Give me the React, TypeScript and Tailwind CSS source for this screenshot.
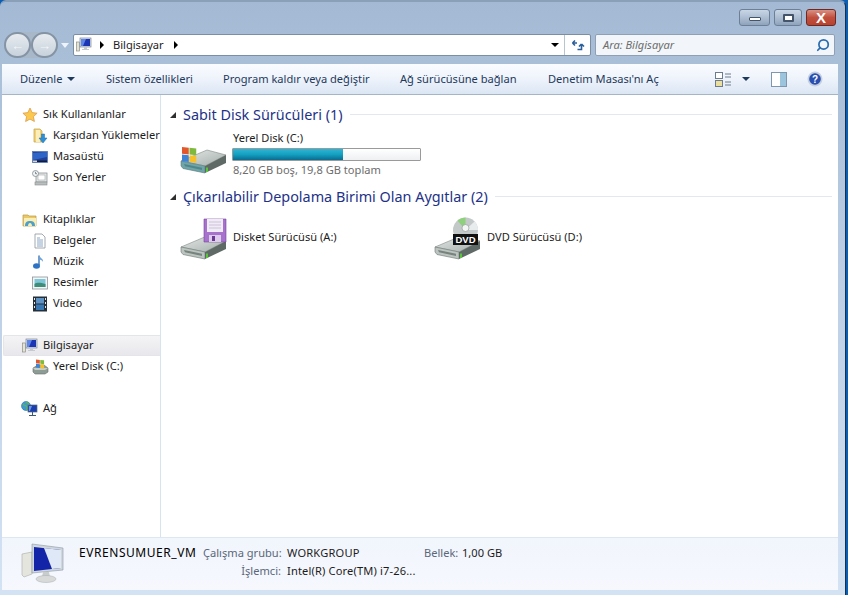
import { Search } from 'lucide-react'
import type { ReactNode } from 'react'

const Caret = ({ className = '' }: { className?: string }) => (
  <span className={`inline-block h-0 w-0 border-x-[4px] border-t-[4px] border-x-transparent border-t-[#1e395b] ${className}`} />
)

const Crumb = () => <span className="inline-block h-0 w-0 border-y-[4px] border-l-[4px] border-y-transparent border-l-black" />

// small monitor with a beige tower, used in the address bar and the nav tree
function ComputerIcon() {
  return (
    <svg width="16" height="16" viewBox="0 0 16 16">
      <rect x="0.500" y="5" width="3" height="9" fill="#e3e3d6" stroke="#8f8f86" strokeWidth="0.7" />
      <rect x="4" y="1" width="11" height="9" fill="#d8dee6" stroke="#7d8a99" strokeWidth="0.7" />
      <path d="M5 2h9v7H5z" fill="#1c35b4" />
      <path d="M5 2h5L7 9H5z" fill="#5f86e6" />
      <path d="M8 10h3v2h2v1H6v-1h2z" fill="#c4cad0" />
    </svg>
  )
}

function StarIcon() {
  return (
    <svg width="16" height="16" viewBox="0 0 16 16">
      <path d="M8 1l2.100 4.600 5 .6-3.700 3.400 1 4.900L8 12.100l-4.400 2.400 1-4.900L.9 6.200l5-.6z" fill="#fbc94e" stroke="#dc9a4a" strokeWidth="0.8" />
    </svg>
  )
}

function DownloadsIcon() {
  return (
    <svg width="16" height="16" viewBox="0 0 16 16">
      <path d="M2 1h6l2 2v11H2z" fill="#f0d27a" stroke="#c4a04a" strokeWidth="0.7" />
      <path d="M4 2h4v12H4z" fill="#fbeeb8" />
      <path d="M9.500 6h3v4H15l-4 5-4-5h2.500z" fill="#2f8fd6" stroke="#1c6aa8" strokeWidth="0.5" />
    </svg>
  )
}

function DesktopIcon() {
  return (
    <svg width="16" height="16" viewBox="0 0 16 16">
      <rect x="0.500" y="2.500" width="15" height="11" fill="#20419a" stroke="#5d7cb0" strokeWidth="0.8" />
      <path d="M1 4l14-1v5L1 11z" fill="#2e66c8" />
      <rect x="1" y="11.500" width="14" height="1.500" fill="#101c3c" />
      <rect x="1" y="11.500" width="4" height="1.500" fill="#d8d8d8" />
    </svg>
  )
}

function RecentIcon() {
  return (
    <svg width="16" height="16" viewBox="0 0 16 16">
      <rect x="4" y="3" width="11" height="9" fill="#e6e8e8" stroke="#8d9396" strokeWidth="0.8" />
      <rect x="6" y="5" width="7" height="5" fill="#fff" stroke="#a3a8aa" strokeWidth="0.6" />
      <circle cx="3.500" cy="3.500" r="3" fill="#f2f4f4" stroke="#7f8a90" strokeWidth="0.8" />
      <path d="M3.500 1.800v1.900h1.500" fill="none" stroke="#50606a" strokeWidth="0.7" />
      <rect x="3" y="12" width="12" height="3" fill="#b9bdbd" stroke="#878c8c" strokeWidth="0.6" />
    </svg>
  )
}

function LibraryIcon() {
  return (
    <svg width="16" height="16" viewBox="0 0 16 16">
      <path d="M1 3h5l1 1h7v10H1z" fill="#eac868" stroke="#b99a44" strokeWidth="0.7" />
      <path d="M2 6h12v8H2z" fill="#fbeeb4" />
      <path d="M3 14c0-4 2-5 5-5s5 1 5 5z" fill="#4f9fc8" />
      <path d="M6 14c0-2 1-3 2-3s2 1 2 3z" fill="#fbeeb4" />
    </svg>
  )
}

function DocIcon() {
  return (
    <svg width="16" height="16" viewBox="0 0 16 16">
      <path d="M3 1h7l3 3v11H3z" fill="#fff" stroke="#8b949c" strokeWidth="0.8" />
      <path d="M5 5h3M5 7h6M5 9h6M5 11h6M5 13h6" stroke="#6d8fb8" strokeWidth="0.8" />
    </svg>
  )
}

function MusicIcon() {
  return (
    <svg width="16" height="16" viewBox="0 0 16 16">
      <path d="M7 1.500v9.500" stroke="#3f74b4" strokeWidth="1.400" />
      <path d="M7 1.500c1 2.500 4.500 3 4 6.500-.5-1.500-2-2.500-4-2.500z" fill="#6aa2dc" />
      <ellipse cx="4.500" cy="12" rx="3.500" ry="2.700" fill="#2f74c4" />
    </svg>
  )
}

function PictureIcon() {
  return (
    <svg width="16" height="16" viewBox="0 0 16 16">
      <rect x="0.500" y="2" width="15" height="12" fill="#f4f6f6" stroke="#8c9498" strokeWidth="0.8" />
      <rect x="2.500" y="4" width="11" height="8" fill="#7fc6d8" />
      <path d="M2.500 9c3-2 6-1 11 0v3h-11z" fill="#3d8d78" />
    </svg>
  )
}

function VideoIcon() {
  return (
    <svg width="16" height="16" viewBox="0 0 16 16">
      <rect x="1" y="0.500" width="14" height="15" fill="#24303a" />
      <rect x="4" y="2" width="8" height="5.500" fill="#5f93c6" />
      <rect x="4" y="8.500" width="8" height="5.500" fill="#3a78b4" />
      <path d="M2 2h1v2H2zM2 6h1v2H2zM2 10h1v2H2zM13 2h1v2h-1zM13 6h1v2h-1zM13 10h1v2h-1z" fill="#e4e8ea" />
    </svg>
  )
}

function WinFlag({ x, y, s }: { x: number; y: number; s: number }) {
  return (
    <g transform={`translate(${x} ${y}) scale(${s}) skewY(6)`}>
      <rect x="0" y="0" width="4.500" height="4.500" fill="#e2572c" />
      <rect x="5" y="0" width="4.500" height="4.500" fill="#7fba3c" />
      <rect x="0" y="5" width="4.500" height="4.500" fill="#3f83d4" />
      <rect x="5" y="5" width="4.500" height="4.500" fill="#f5c02a" />
    </g>
  )
}

function SmallDiskIcon() {
  return (
    <svg width="17" height="16" viewBox="0 0 17 16">
      <path d="M1 9l5-3h6l4 3v4l-3 2H3l-2-2z" fill="#8e9c96" stroke="#66716c" strokeWidth="0.6" />
      <path d="M1 9h15l-3 2H3z" fill="#c6cec9" />
      <WinFlag x={4} y={0.500} s={0.85} />
    </svg>
  )
}

function NetworkIcon() {
  return (
    <svg width="18" height="16" viewBox="0 0 18 16">
      <circle cx="5" cy="5" r="4.500" fill="#3f9ad0" stroke="#2c6f9c" strokeWidth="0.6" />
      <path d="M2 3c1 2 3 1 4 3s-1 2 0 3M5 1c1 1 3 1 3 3" fill="none" stroke="#63b847" strokeWidth="1.300" />
      <rect x="7" y="4" width="9" height="7" fill="#1b3fae" stroke="#5a6c80" strokeWidth="0.7" />
      <path d="M8 5h3l-2 5H8z" fill="#6f96e6" />
      <path d="M11 11h1v3h3v1H8v-1h3z" fill="#3c5a78" />
    </svg>
  )
}

// the big hard drive body, overlay is whatever sits on top of it
function DriveIcon({ id, overlay }: { id: string; overlay?: ReactNode }) {
  return (
    <svg width="48" height="48" viewBox="0 0 48 48" className="shrink-0">
      <defs>
        <linearGradient id={id} x1="0" y1="0" x2="1" y2="1">
          <stop offset="0" stopColor="#e4e8e6" />
          <stop offset="1" stopColor="#a4aeaa" />
        </linearGradient>
      </defs>
      <path d="M1 34L27 23l19 5-21 11z" fill={`url(#${id})`} stroke="#7f8985" strokeWidth="0.6" />
      <path d="M1 34l24 5v7L3 41.500 1 39z" fill="#bcc4c0" stroke="#6c7572" strokeWidth="0.6" />
      <path d="M4 37l18 3.700v2.300L5 39.200z" fill="#78827e" />
      <path d="M25 39l21-11v8L25 46z" fill="#5f6966" />
      <rect x="26" y="40.500" width="2" height="4.500" fill="#5bc43c" />
      {overlay}
    </svg>
  )
}

const HddOverlay = (
  <>
    <path d="M1 34l24 5v7L3 41.500 1 39z" fill="#2f8a94" opacity="0.55" />
    <WinFlag x={2} y={20} s={1.5} />
  </>
)

const FloppyOverlay = (
  <>
    <path d="M24 6h22v23H24z" fill="#a672cc" stroke="#7a3fa0" strokeWidth="0.6" />
    <path d="M27 6h16v13H27z" fill="#f0ecf5" />
    <path d="M29 9h12M29 12h12M29 15h12" stroke="#c5b8d2" strokeWidth="0.8" />
    <path d="M29 22h12v7H29z" fill="#dccbea" />
    <rect x="32" y="23" width="3" height="5" fill="#6a3a90" />
  </>
)

const DvdOverlay = (
  <>
    <circle cx="31.500" cy="17" r="12.500" fill="#c3c8c8" />
    <path d="M31.500 17l-8-9.500a12.500 12.500 0 0 1 8-3z" fill="#8fd07f" />
    <path d="M31.500 17l9-8.500a12.500 12.500 0 0 1 3.500 8.500z" fill="#e8ecec" />
    <circle cx="31.500" cy="15" r="3.500" fill="#f4f6f6" stroke="#8a9090" strokeWidth="0.6" />
    <rect x="19" y="21" width="25" height="11" fill="#111" />
    <text x="31.500" y="30" textAnchor="middle" fontSize="9.500" fontWeight="700" fill="#fff" fontFamily="'Liberation Sans', sans-serif">DVD</text>
  </>
)

function BigComputerIcon() {
  return (
    <svg width="44" height="44" viewBox="0 0 44 44">
      <path d="M2 11l10-2v22l-8 3-2-2z" fill="#e4e6de" stroke="#a8aca4" strokeWidth="0.6" />
      <path d="M12 1l31 4v22l-31 3z" fill="#cfd6dc" stroke="#8c98a4" strokeWidth="0.6" />
      <path d="M14 4l27 3v18l-27 3z" fill="#1424a8" />
      <path d="M24 5l17 2v18l-9 1z" fill="#dfe8f6" />
      <path d="M23 29h6l1 5h-8z" fill="#c8cccc" />
      <ellipse cx="26" cy="36" rx="10" ry="3.500" fill="#d8dada" stroke="#a8acac" strokeWidth="0.5" />
    </svg>
  )
}

function NavRow({ icon, label, sub, active }: { icon: ReactNode; label: string; sub?: boolean; active?: boolean }) {
  return (
    <div
      className={`flex h-[21px] items-center gap-[4px] whitespace-nowrap ${sub ? 'pl-[29px]' : active ? 'ml-[1px] rounded-l-[2px] border border-r-0 border-[#e3e5e9] bg-gradient-to-b from-[#f4f4f6] to-[#e8e8ec] pl-[17px]' : 'pl-[19px]'}`}
    >
      <span className="flex w-[18px] shrink-0 justify-center">{icon}</span>
      <span>{label}</span>
    </div>
  )
}

function GroupHeader({ title }: { title: string }) {
  return (
    <div className="flex h-[21px] items-center">
      <span className="ml-[9px] h-0 w-0 border-b-[6px] border-l-[6px] border-b-[#2e2e2e] border-l-transparent" />
      <span className="ml-[7px] shrink-0 whitespace-nowrap text-[14.4px] text-[#1e3287]">{title}</span>
      <span className="ml-[7px] mr-[6px] h-px flex-1 bg-[#e2e8f2]" />
    </div>
  )
}

export default function App() {
  return (
    <div className="flex h-[595px] w-[848px] overflow-hidden bg-[#0a5fb4] text-[11.1px] text-[#1c1c1c] [font-family:'Noto_Sans',sans-serif]">
      <div className="mr-[2px] flex min-w-0 flex-1 flex-col rounded-t-[6px] border-t-2 border-r border-t-[#8aa0b8] border-r-[#17324f] bg-gradient-to-b from-[#a4bad4] via-[#bdd0e6] to-[#d4e3f4] pb-[5px] pl-[2px] pr-[7px]">
        {/* caption buttons */}
        <div className="flex h-[30px] shrink-0 justify-end pt-[7px] pr-[2px]">
          <div className="flex h-[17px] gap-[4px]">
            <div className="flex w-[31px] items-center justify-center rounded-[3px] border border-[#6d7f94] bg-gradient-to-b from-[#c8d6e6] via-[#aebed2] to-[#8ea4bc]">
              <span className="mt-[3px] h-[4px] w-[12px] rounded-[1px] border border-[#44546a] bg-white" />
            </div>
            <div className="flex w-[28px] items-center justify-center rounded-[3px] border border-[#6d7f94] bg-gradient-to-b from-[#c8d6e6] via-[#aebed2] to-[#8ea4bc]">
              <span className="h-[8px] w-[11px] rounded-[1px] border-2 border-[#44546a] bg-white" />
            </div>
            <div className="flex w-[30px] items-center justify-center rounded-[3px] border border-[#6b2b24] bg-gradient-to-b from-[#d99084] via-[#c0503e] to-[#b8422e] text-[15px] font-bold leading-none text-white [font-family:'Liberation_Sans',sans-serif]">
              X
            </div>
          </div>
        </div>

        {/* back / forward, address, search */}
        <div className="flex h-[26px] shrink-0 items-center">
          <div className="ml-[2px] flex h-[26px] items-center rounded-full bg-[#a8b8c8]">
            <span className="flex h-[26px] w-[27px] items-center justify-center rounded-full border-2 border-[#8594a4] bg-gradient-to-b from-[#e6ebef] to-[#c8d2dc] text-[13px] leading-none text-[#f4f6f8]">←</span>
            <span className="flex h-[26px] w-[27px] items-center justify-center rounded-full border-2 border-[#8594a4] bg-gradient-to-b from-[#e6ebef] to-[#c8d2dc] text-[13px] leading-none text-[#f4f6f8]">→</span>
          </div>
          <span className="ml-[3px] h-0 w-0 border-x-[4px] border-t-[5px] border-x-transparent border-t-[#eef3f8]" />
          <div className="ml-[4px] flex h-[22px] w-[518px] items-center rounded-[2px] border border-[#7b8ea3] bg-white">
            <span className="ml-[2px] w-[16px]"><ComputerIcon /></span>
            <span className="ml-[8px]"><Crumb /></span>
            <span className="ml-[9px]">Bilgisayar</span>
            <span className="ml-[10px]"><Crumb /></span>
            <span className="ml-auto flex h-full items-center border-r border-[#b8c4d2] pr-[5px]"><Caret className="!border-t-black" /></span>
            <span className="flex w-[25px] items-center justify-center">
              <svg width="17" height="13" viewBox="0 0 17 13">
                <path d="M8 4H3.500M3.500 4l2.500-2.500M3.500 4L6 6.500" fill="none" stroke="#2a5f9c" strokeWidth="1.600" />
                <path d="M8.500 10.500h4V6M12.500 5l-2.500 2.500M12.500 5l2.500 2.500" fill="none" stroke="#2a5f9c" strokeWidth="1.600" />
              </svg>
            </span>
          </div>
          <div className="ml-[4px] flex h-[22px] w-[240px] items-center justify-between rounded-[2px] border border-[#8fa0b4] bg-[#f2f6fa] pl-[7px] pr-[4px]">
            <span className="italic text-[#6d6d6d]">Ara: Bilgisayar</span>
            <Search size={14} strokeWidth={3} className="-scale-x-100 text-[#2a6cb0]" />
          </div>
        </div>

        {/* command bar */}
        <div className="mt-[6px] flex h-[31px] shrink-0 items-center border-b border-[#a6b5c6] bg-gradient-to-b from-[#fafcff] via-[#eef3fb] to-[#dbe6f4] pl-[18px] text-[#1e395b]">
          <span className="flex w-[86px] items-center gap-[5px]">Düzenle <Caret /></span>
          <span className="w-[117px]">Sistem özellikleri</span>
          <span className="w-[177px]">Program kaldır veya değiştir</span>
          <span className="w-[148px]">Ağ sürücüsüne bağlan</span>
          <span>Denetim Masası'nı Aç</span>
          <div className="ml-auto flex items-center pr-[15px]">
            <svg width="17" height="15" viewBox="0 0 17 15">
              <rect x="0.500" y="0.500" width="7" height="6" fill="#fff" stroke="#6c7c8c" />
              <rect x="0.500" y="8.500" width="7" height="6" fill="#eadf9c" stroke="#6c7c8c" />
              <path d="M10 2h6M10 5h6M10 10h6M10 13h6" stroke="#6c7c8c" />
            </svg>
            <Caret className="ml-[10px]" />
            <svg width="16" height="15" viewBox="0 0 16 15" className="ml-[21px]">
              <rect x="0.500" y="0.500" width="15" height="14" fill="#fff" stroke="#7f97ae" />
              <rect x="9" y="1" width="6" height="13" fill="#9cc4dc" />
            </svg>
            <svg width="16" height="16" viewBox="0 0 16 16" className="ml-[20px]">
              <circle cx="8" cy="8" r="7.500" fill="#c6d0e0" />
              <circle cx="8" cy="8" r="5.800" fill="#2a4fb0" />
              <text x="8" y="11.500" textAnchor="middle" fontSize="10" fontWeight="700" fill="#fff" fontFamily="'Liberation Sans', sans-serif">?</text>
            </svg>
          </div>
        </div>

        {/* nav tree and drive list */}
        <div className="flex min-h-0 flex-1 bg-white">
          <nav className="w-[158px] shrink-0 overflow-hidden pt-[9px]">
            <NavRow icon={<StarIcon />} label="Sık Kullanılanlar" />
            <NavRow sub icon={<DownloadsIcon />} label="Karşıdan Yüklemeler" />
            <NavRow sub icon={<DesktopIcon />} label="Masaüstü" />
            <NavRow sub icon={<RecentIcon />} label="Son Yerler" />
            <div className="h-[21px]" />
            <NavRow icon={<LibraryIcon />} label="Kitaplıklar" />
            <NavRow sub icon={<DocIcon />} label="Belgeler" />
            <NavRow sub icon={<MusicIcon />} label="Müzik" />
            <NavRow sub icon={<PictureIcon />} label="Resimler" />
            <NavRow sub icon={<VideoIcon />} label="Video" />
            <div className="h-[21px]" />
            <NavRow active icon={<ComputerIcon />} label="Bilgisayar" />
            <NavRow sub icon={<SmallDiskIcon />} label="Yerel Disk (C:)" />
            <div className="h-[21px]" />
            <NavRow icon={<NetworkIcon />} label="Ağ" />
          </nav>
          <main className="min-w-0 flex-1 border-l border-[#d6e3f0] pt-[9px]">
            <GroupHeader title="Sabit Disk Sürücüleri (1)" />
            <div className="ml-[19px] flex h-[61px] items-start">
              <div className="mt-[2px]"><DriveIcon id="driveC" overlay={HddOverlay} /></div>
              <div className="ml-[5px] mt-[5px] flex flex-col">
                <span className="leading-[16px]">Yerel Disk (C:)</span>
                <div className="-ml-[1px] mt-[2px] h-[13px] w-[189px] rounded-[1px] border border-[#9a9a9a] bg-gradient-to-b from-white to-[#eef0f2]">
                  <div className="h-full w-[59%] bg-gradient-to-b from-[#2fb4d4] via-[#14a0c0] to-[#0a6c90]" />
                </div>
                <span className="mt-[1px] leading-[16px] text-[#6d6d6d]">8,20 GB boş, 19,8 GB toplam</span>
              </div>
            </div>
            <GroupHeader title="Çıkarılabilir Depolama Birimi Olan Aygıtlar (2)" />
            <div className="ml-[19px] mt-[6px] flex h-[48px] items-center">
              <div className="flex w-[254px] items-center gap-[5px]">
                <DriveIcon id="driveA" overlay={FloppyOverlay} />
                <span>Disket Sürücüsü (A:)</span>
              </div>
              <div className="flex items-center gap-[5px]">
                <DriveIcon id="driveD" overlay={DvdOverlay} />
                <span>DVD Sürücüsü (D:)</span>
              </div>
            </div>
          </main>
        </div>

        {/* details pane */}
        <div className="flex h-[53px] shrink-0 border-t border-[#dde6f2] bg-gradient-to-b from-[#f1f5fc] to-[#f6f8fe]">
          <div className="ml-[18px] mt-[5px] w-[59px] shrink-0"><BigComputerIcon /></div>
          <div className="mt-[6px] grid grid-cols-[124px_78px_143px_34px_auto] grid-rows-[18px_18px] items-center gap-x-0 whitespace-nowrap">
            <span className="text-[12px] tracking-[0.55px] text-black">EVRENSUMUER_VM</span>
            <span className="text-right text-[#5a6779]">Çalışma grubu:</span>
            <span className="pl-[6px] tracking-[0.2px]">WORKGROUP</span>
            <span className="text-right text-[#5a6779]">Bellek:</span>
            <span className="pl-[4px]">1,00 GB</span>
            <span />
            <span className="text-right text-[#5a6779]">İşlemci:</span>
            <span className="pl-[6px] tracking-[0.15px]">Intel(R) Core(TM) i7-26...</span>
          </div>
        </div>
      </div>
    </div>
  )
}
